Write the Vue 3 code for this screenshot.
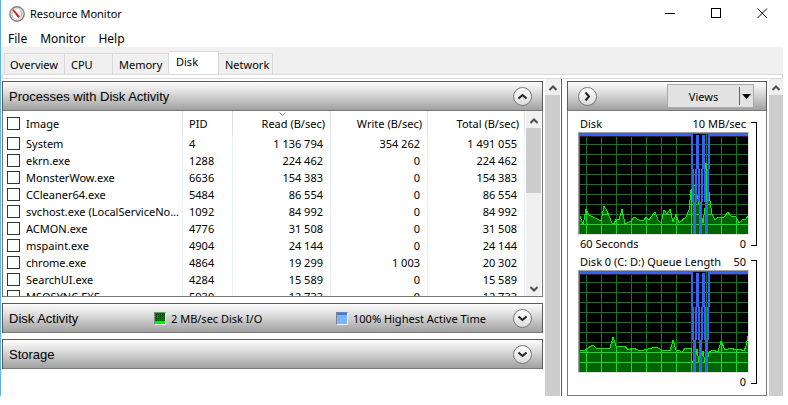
<script setup>
import { ref } from 'vue'

const menus = ['File', 'Monitor', 'Help']
const tabs = ['Overview', 'CPU', 'Memory', 'Disk', 'Network']
const activeTab = ref('Disk')

const processes = ref([
  { image: 'System', pid: 4, read: '1 136 794', write: '354 262', total: '1 491 055' },
  { image: 'ekrn.exe', pid: 1288, read: '224 462', write: '0', total: '224 462' },
  { image: 'MonsterWow.exe', pid: 6636, read: '154 383', write: '0', total: '154 383' },
  { image: 'CCleaner64.exe', pid: 5484, read: '86 554', write: '0', total: '86 554' },
  { image: 'svchost.exe (LocalServiceNo...', pid: 1092, read: '84 992', write: '0', total: '84 992' },
  { image: 'ACMON.exe', pid: 4776, read: '31 508', write: '0', total: '31 508' },
  { image: 'mspaint.exe', pid: 4904, read: '24 144', write: '0', total: '24 144' },
  { image: 'chrome.exe', pid: 4864, read: '19 299', write: '1 003', total: '20 302' },
  { image: 'SearchUI.exe', pid: 4284, read: '15 589', write: '0', total: '15 589' },
  { image: 'MSOSYNC.EXE', pid: 5930, read: '12 733', write: '0', total: '12 733' },
])

const charts = [
  {
    id: 'disk',
    title: 'Disk',
    max: '10 MB/sec',
    footer: '60 Seconds',
    points:
      '0,83 3,92 6,76 9,82 15,85 21,88 24,73 27,78 32,90 34,91 36,86 39,87 42,76 45,91 51,88 54,84 59,87 64,87 66,84 69,87 75,79 78,87 81,90 84,77 87,81 90,76 93,89 96,81 99,90 106,84 109,77 111,57 115,52 117,62 120,75 123,90 125,75 126,30 130,68 132,81 135,87 138,84 144,84 148,79 151,83 156,84 159,90 163,86 166,86 168,83',
  },
  {
    id: 'queue',
    title: 'Disk 0 (C: D:) Queue Length',
    max: '50',
    footer: '',
    points:
      '0,79 3,80 13,74 16,77 22,78 30,77 33,66 36,75 45,75 48,79 53,77 58,79 64,79 76,76 82,79 90,80 93,69 96,79 99,79 102,82 105,77 111,77 112,90 115,90 117,78 119,91 121,91 123,80 125,91 127,91 129,81 133,79 138,81 141,70 145,79 151,77 156,79 159,78 164,80 166,75 168,65',
  },
]

// grid lines
const gridX = Array.from({ length: 11 }, (_, i) => 6 + i * 15)
const gridY = Array.from({ length: 9 }, (_, i) => 11 + i * 10)

// active time line: x, y, width, height
const activeTime = [
  [0, 1, 111, 2], [130, 1, 38, 2],
  [111, 1, 2, 35], [116, 2, 3, 34], [122, 2, 3, 34], [128, 1, 2, 35],
  [112, 36, 2, 33], [115, 36, 2, 33], [118, 36, 2, 33], [121, 36, 2, 33], [124, 36, 2, 33], [127, 36, 2, 33],
  [113, 69, 3, 32], [119, 69, 3, 32], [125, 69, 3, 32],
]
</script>

<template>
  <div class="window">
    <header class="titlebar">
      <svg class="logo" width="16" height="16" viewBox="0 0 16 16">
        <circle cx="8" cy="8" r="7.2" fill="#f4f3f0" stroke="#85837f" stroke-width="1.4" />
        <circle cx="8" cy="8" r="5.4" fill="#fff" stroke="#d4cfc8" />
        <path d="M4 11.5A5 5 0 0 1 3.5 6" fill="none" stroke="#c7b29a" />
        <path d="M11.5 5a5 5 0 0 1 .6 5.6" fill="none" stroke="#d9a58e" />
        <path d="M4.4 3.6L10.6 10.4L9.2 11.4L4 4.4Z" fill="#d21a1a" stroke="#d21a1a" stroke-width=".8" />
      </svg>
      <h1>Resource Monitor</h1>
      <div class="window-buttons">
        <button aria-label="Minimize">
          <svg width="11" height="11"><path d="M0 5.5H10" stroke="#000" /></svg>
        </button>
        <button aria-label="Maximize">
          <svg width="11" height="11"><rect x=".5" y=".5" width="9" height="9" fill="none" stroke="#000" /></svg>
        </button>
        <button aria-label="Close">
          <svg width="11" height="11"><path d="M.5.5L10 10M10 .5L.5 10" stroke="#000" /></svg>
        </button>
      </div>
    </header>

    <nav class="menu">
      <button v-for="menu in menus" :key="menu">{{ menu }}</button>
    </nav>

    <div class="tabs" role="tablist">
      <button
        v-for="tab in tabs"
        :key="tab"
        role="tab"
        :aria-selected="tab === activeTab"
        :class="{ active: tab === activeTab }"
        @click="activeTab = tab"
      >
        {{ tab }}
      </button>
    </div>
    <div class="tab-page-edge"></div>

    <main class="content">
      <div class="panels">
        <section class="panel">
          <div class="panel-header">
            <h2>Processes with Disk Activity</h2>
            <button class="round" aria-label="Collapse">
              <svg width="9" height="7"><path d="M.5 5.5L4.5 2L8.5 5.5" /></svg>
            </button>
          </div>
          <div class="list">
            <table>
              <colgroup>
                <col />
                <col class="col-pid" />
                <col class="col-read" />
                <col class="col-value" />
                <col class="col-value" />
              </colgroup>
              <thead>
                <tr>
                  <th>
                    <label><input type="checkbox" />Image</label>
                  </th>
                  <th>PID</th>
                  <th class="num sorted">
                    <svg class="sort" width="7" height="4"><path d="M.5.5L3.5 3.5L6.5.5" /></svg>
                    Read (B/sec)
                  </th>
                  <th class="num">Write (B/sec)</th>
                  <th class="num">Total (B/sec)</th>
                </tr>
              </thead>
              <tbody>
                <tr v-for="process in processes" :key="process.pid">
                  <td>
                    <label><input type="checkbox" />{{ process.image }}</label>
                  </td>
                  <td>{{ process.pid }}</td>
                  <td class="num">{{ process.read }}</td>
                  <td class="num">{{ process.write }}</td>
                  <td class="num">{{ process.total }}</td>
                </tr>
              </tbody>
            </table>
            <div class="scrollbar list-scroll">
              <svg class="arrow" width="8" height="6"><path d="M.5 5L4 1.5L7.5 5" /></svg>
              <div class="thumb"></div>
              <svg class="arrow" width="8" height="6"><path d="M.5 1L4 4.5L7.5 1" /></svg>
            </div>
          </div>
        </section>

        <section class="panel">
          <div class="panel-header with-legend">
            <h2>Disk Activity</h2>
            <span class="legend"><i class="swatch io"></i>2 MB/sec Disk I/O</span>
            <span class="legend"><i class="swatch time"></i>100% Highest Active Time</span>
            <button class="round" aria-label="Expand">
              <svg width="9" height="7"><path d="M.5 1.5L4.5 5L8.5 1.5" /></svg>
            </button>
          </div>
        </section>

        <section class="panel">
          <div class="panel-header">
            <h2>Storage</h2>
            <button class="round" aria-label="Expand">
              <svg width="9" height="7"><path d="M.5 1.5L4.5 5L8.5 1.5" /></svg>
            </button>
          </div>
        </section>
      </div>

      <div class="scrollbar main-scroll">
        <svg class="arrow" width="8" height="6"><path d="M.5 5L4 1.5L7.5 5" /></svg>
        <div class="thumb"></div>
      </div>

      <aside class="side">
        <div class="panel-header side-header">
          <button class="round" aria-label="Hide graphs">
            <svg width="7" height="9"><path d="M1.5 .5L5 4.5L1.5 8.5" /></svg>
          </button>
          <div class="views">
            <button>Views</button>
            <button class="drop" aria-label="Views menu">
              <svg width="9" height="5"><path d="M0 0H9L4.5 5Z" /></svg>
            </button>
          </div>
        </div>
        <div class="charts">
          <div v-for="chart in charts" :key="chart.id" class="chart">
            <div class="chart-label">
              <span>{{ chart.title }}</span><span>{{ chart.max }}</span>
            </div>
            <svg class="graph" viewBox="-1 0 169 101" shape-rendering="crispEdges">
              <clipPath :id="'area-' + chart.id">
                <polygon :points="`0,101 ${chart.points} 168,101`" />
              </clipPath>
              <rect x="-1" y="0" width="169" height="101" fill="#646464" />
              <rect x="0" y="1" width="168" height="100" fill="#000" />
              <g fill="#0a7d18">
                <rect v-for="x in gridX" :key="'x' + x" :x="x" y="1" width="1" height="100" />
                <rect v-for="y in gridY" :key="'y' + y" x="0" :y="y" width="168" height="1" />
              </g>
              <polygon :points="`0,101 ${chart.points} 168,101`" fill="#006400" />
              <g fill="#14dc28" :clip-path="`url(#area-${chart.id})`">
                <rect v-for="x in gridX" :key="'bx' + x" :x="x" y="1" width="1" height="100" />
                <rect v-for="y in gridY" :key="'by' + y" x="0" :y="y" width="168" height="1" />
              </g>
              <polyline :points="chart.points" fill="none" stroke="#00f000" />
              <path d="M0 3.5H111M130 3.5H168" stroke="#3c1446" />
              <g fill="#3264fa">
                <rect
                  v-for="([x, y, w, h], i) in activeTime"
                  :key="i"
                  :x="x"
                  :y="y"
                  :width="w"
                  :height="h"
                />
              </g>
            </svg>
            <div class="chart-label">
              <span>{{ chart.footer }}</span><span>0</span>
            </div>
            <div class="bracket"></div>
          </div>
        </div>
      </aside>

      <div class="scrollbar side-scroll">
        <svg class="arrow" width="8" height="6"><path d="M.5 5L4 1.5L7.5 5" /></svg>
        <div class="thumb"></div>
      </div>
    </main>
  </div>
</template>

<style>
body {
  margin: 0;
  background: #fff;
}
</style>

<style scoped>
.window {
  display: flex;
  flex-direction: column;
  height: calc(100vh - 9px);
  margin-right: 5px;
  border-left: 1px solid #5fb2ee;
  box-sizing: border-box;
  overflow: hidden;
  background: #fff;
  color: #000;
  font-family: "Noto Sans", "Open Sans", sans-serif;
  font-size: 11px;
}

button {
  margin: 0;
  padding: 0;
  border: none;
  background: none;
  color: inherit;
  font: inherit;
}

h1,
h2 {
  margin: 0;
  font-weight: normal;
}

svg {
  display: block;
}

.titlebar {
  display: flex;
  align-items: center;
  height: 27px;
  flex: none;
  padding-left: 8px;
}

.titlebar h1 {
  margin-left: 5px;
  font-size: 11px;
}

.window-buttons {
  display: flex;
  margin-left: auto;
}

.window-buttons button {
  display: flex;
  align-items: center;
  justify-content: center;
  width: 46px;
  height: 27px;
  padding-left: 4px;
  box-sizing: border-box;
}

.menu {
  display: flex;
  align-items: center;
  gap: 13px;
  height: 20px;
  flex: none;
  padding: 2px 7px 0;
  box-sizing: border-box;
  font-size: 12px;
}

.tabs {
  display: grid;
  grid-template-columns: 61px 48px 56px 50px 54px;
  align-items: end;
  height: 27px;
  flex: none;
  padding-left: 3px;
  background: #f0f0f0;
}

.tabs button {
  height: 21px;
  padding-left: 6px;
  border: 1px solid #d9d9d9;
  border-left: none;
  border-bottom: none;
  text-align: left;
}

.tabs button:first-child {
  padding-left: 5px;
  border-left: 1px solid #d9d9d9;
}

.tabs button.active {
  height: 23px;
  padding-left: 7px;
  padding-bottom: 3px;
  background: #fff;
}

.tab-page-edge {
  height: 5px;
  flex: none;
  margin-left: 1px;
  border: 1px solid #d9d9d9;
  box-sizing: border-box;
}

.content {
  display: flex;
  flex: 1;
  min-height: 0;
  padding-left: 1px;
}

.panels {
  display: flex;
  flex-direction: column;
  flex: 1;
  gap: 6px;
  min-width: 0;
  padding-top: 2px;
}

.panel-header {
  display: flex;
  align-items: center;
  justify-content: space-between;
  height: 30px;
  padding: 0 10px 0 6px;
  border: 1px solid #5a5a5a;
  border-bottom-color: #787878;
  box-sizing: border-box;
  background: linear-gradient(#fdfdfd, #e0e0e0 35%, #a0a0a0);
}

.panel-header h2 {
  font-family: "Liberation Sans", Arial, sans-serif;
  font-size: 13px;
}

.with-legend {
  display: grid;
  grid-template-columns: 145px 182px 1fr auto;
}

.legend {
  display: flex;
  align-items: center;
  gap: 5px;
}

.swatch {
  width: 12px;
  height: 13px;
  border: 1px solid #828282;
  border-right-color: #f0f0f0;
  border-bottom-color: #f0f0f0;
  box-sizing: border-box;
}

.io {
  background:
    linear-gradient(transparent 8px, #00f000 8px),
    repeating-linear-gradient(90deg, #008200 0 1px, transparent 1px 2px),
    repeating-linear-gradient(#008200 0 1px, #002800 1px 2px);
}

.time {
  background: linear-gradient(#3c78f0 2px, #78b4ff 2px);
}

.round {
  display: flex;
  align-items: center;
  justify-content: center;
  width: 19px;
  height: 19px;
  border: 1px solid #787878;
  border-radius: 50%;
  background: linear-gradient(#fff, #dcdcdc);
}

.round path {
  fill: none;
  stroke: #222;
  stroke-width: 2;
}

.list {
  display: flex;
  height: 186px;
  padding-right: 1px;
  border: solid #787878;
  border-width: 0 1px 1px;
  box-sizing: border-box;
  overflow: hidden;
}

table {
  flex: 1;
  height: max-content;
  table-layout: fixed;
  border-collapse: separate;
  border-spacing: 0;
}

.col-pid {
  width: 50px;
}

.col-read {
  width: 98px;
}

.col-value {
  width: 97px;
}

th,
td {
  height: 17px;
  padding: 0 6px;
  border-right: 1px solid #e6f0fc;
  box-sizing: border-box;
  font-weight: normal;
  line-height: 17px;
  text-align: left;
  white-space: nowrap;
}

th {
  position: relative;
  height: 24px;
  border-right-color: #e0e0e0;
}

th:first-child,
td:first-child {
  padding: 0 0 0 4px;
}

th.num {
  padding-right: 5px;
  text-align: right;
}

td.num {
  padding-right: 7px;
  text-align: right;
}

.sort {
  position: absolute;
  top: 1px;
  left: calc(50% - 3px);
  fill: none;
  stroke: #787878;
}

label {
  display: flex;
  align-items: center;
  gap: 6px;
}

input[type="checkbox"] {
  appearance: none;
  width: 13px;
  height: 13px;
  margin: 0;
  border: 1px solid #333;
  background: #fff;
}

.scrollbar {
  display: flex;
  flex-direction: column;
  align-items: center;
  width: 15px;
  flex: none;
  background: #f0f0f0;
}

.scrollbar .arrow {
  flex: none;
  margin: 6px 0 4px;
  fill: none;
  stroke: #505050;
  stroke-width: 2;
}

.scrollbar .thumb {
  flex: 1;
  width: 100%;
  background: #cdcdcd;
}

.list-scroll {
  margin-left: 1px;
  padding-top: 1px;
  box-sizing: border-box;
}

.list-scroll .thumb {
  flex: none;
  height: 65px;
  margin-bottom: auto;
}

.main-scroll {
  margin: 0 1px 0 2px;
}

.side {
  display: flex;
  flex-direction: column;
  width: 200px;
  flex: none;
  padding: 2px 2px 0 5px;
  border-left: 1px solid #5a5a5a;
}

.side-header {
  flex: none;
  padding: 0 12px 0 10px;
}

.views {
  display: flex;
  align-items: center;
  width: 87px;
  height: 24px;
  border: 1px solid #aaa;
  box-sizing: border-box;
  background: #e2e2e2;
}

.views button {
  flex: 1;
}

.views .drop {
  display: flex;
  align-items: center;
  justify-content: center;
  height: 18px;
  flex: 0 0 14px;
  border-left: 1px solid #646464;
}

.charts {
  flex: 1;
  padding: 3px 9px 0 10px;
  border: solid #787878;
  border-width: 0 1px 1px;
}

.chart {
  display: grid;
  grid-template-columns: 171px 6px;
  grid-template-rows: 18px 103px 17px;
  column-gap: 2px;
}

.chart-label {
  display: flex;
  grid-column: 1;
  align-items: center;
  justify-content: space-between;
  padding: 0 3px 0 2px;
  white-space: nowrap;
}

.graph {
  grid-column: 1;
  width: 100%;
  height: 103px;
  border: 1px solid #a0a0a0;
  border-right-color: #e3e3e3;
  border-bottom-color: #e3e3e3;
  box-sizing: border-box;
}

.bracket {
  grid-column: 2;
  grid-row: 1 / 4;
  margin: 8px 0 6px;
  border: solid #000;
  border-width: 1px 1px 1px 0;
}

.side-scroll {
  width: 14px;
}
</style>
